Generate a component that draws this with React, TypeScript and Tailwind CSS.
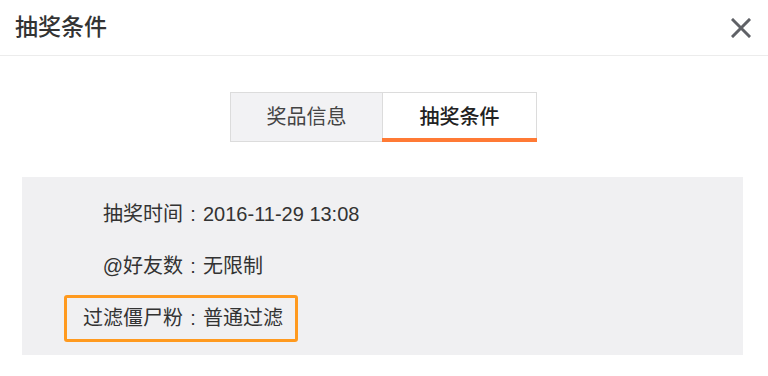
import React from "react";

export default function App() {
  const font = { fontFamily: '"Liberation Sans", "Noto Sans CJK SC", sans-serif' };
  const Colon = () => <span className="w-[20px] text-center">:</span>;
  return (
    <div className="w-[768px] h-[376px] bg-white overflow-hidden" style={font}>
      <div className="h-[56px] flex items-center justify-between border-b border-[#ececec] pl-[15px] pr-[16px]">
        <span className="text-[23px] font-medium text-[#333]">抽奖条件</span>
        <svg width="20" height="20" viewBox="0 0 20 20" className="mr-[1px]">
          <path d="M2 2 L18 18 M18 2 L2 18" stroke="#5f6166" strokeWidth="3" strokeLinecap="square" />
        </svg>
      </div>
      <div className="flex justify-center pt-[36px]">
        <div className="flex border border-[#dcdcdc] h-[50px] mr-[1px]">
          <div className="w-[152px] bg-[#f2f2f4] flex items-center justify-center text-[20px] text-[#444] border-r border-[#dcdcdc]">
            奖品信息
          </div>
          <div className="w-[153px] bg-white flex items-center justify-center text-[20px] text-[#222] font-medium relative">
            抽奖条件
            <div className="absolute left-[-1px] right-[-1px] bottom-[-1px] h-[4px] bg-[#ff7a35]" />
          </div>
        </div>
      </div>
      <div className="mt-[35px] ml-[22px] w-[721px] h-[178px] bg-[#f0f0f2] py-[11px] text-[20px] text-[#333]">
        <div className="h-[52px] flex items-center pl-[56px]">
          <span className="w-[105px] text-right">抽奖时间</span>
          <Colon />
          <span>2016-11-29 13:08</span>
        </div>
        <div className="h-[52px] flex items-center pl-[56px]">
          <span className="w-[105px] text-right">@好友数</span>
          <Colon />
          <span>无限制</span>
        </div>
        <div className="h-[52px] flex items-center pl-[42px]">
          <div className="h-[47px] flex items-center border-[3px] border-[#ff9a1f] rounded-[3px] pl-[11px] pr-[12px]">
            <span className="w-[105px] text-right">过滤僵尸粉</span>
            <Colon />
            <span>普通过滤</span>
          </div>
        </div>
      </div>
    </div>
  );
}
